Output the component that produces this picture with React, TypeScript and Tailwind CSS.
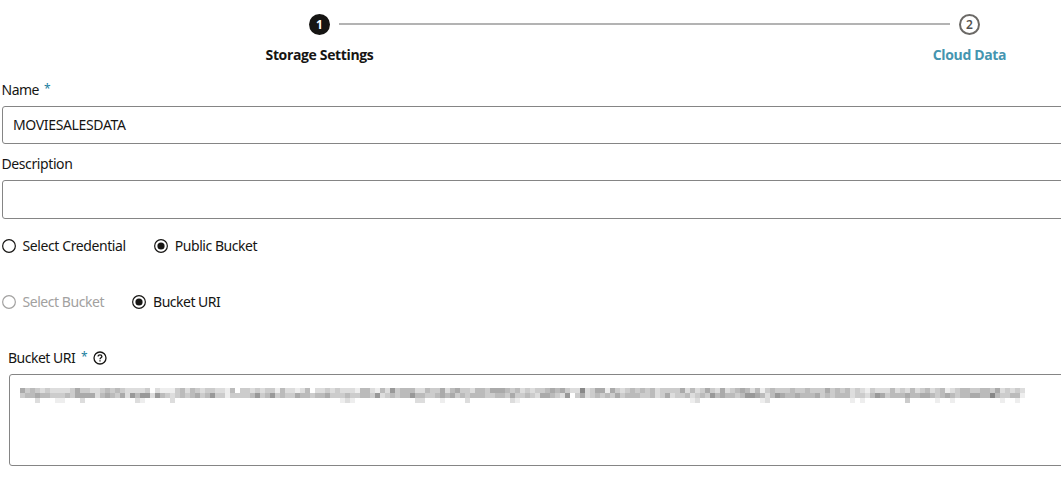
import React from "react";

const CELL = 5;
// one hex digit per cell: f is white, 0 is black
const redacted = [
  "acbcdcdddd" + "caccddcbcb" + "cddddcfdee" + "ecbdbcdccd" + "debfccdcdc" +
    "cebddedbfddcdcdddebbdebd9" + "cbbbddbccadbaccdbbcaaabcb" + "dc" +
    "dccbabacdd" + "8dcaaeacdc" + "bcbcbdcccc" + "adbdcacdad" + "cbabdbecbc" +
    "ccbccbccca" + "cbcbdcdecd" + "ddbdcdbdcb" + "dcbedcbbcc" + "bbcadcdcd",
  "cbbabbcccb" + "caaaadbabc" + "ad9b99d9bc" + "dcbcbacb9c" + "ceccccb9cb" +
    "9cbccabbcbbacccbccbbc9dcb" + "cbb9bbccbabacbcbbbccbbcac" + "cb" +
    "cdaabcd9fc" + "adcbcbcacb" + "bbccbdcadc" + "cbdcbc9bab" + "bcb99abdb9" +
    "abbabbbacbcbbb" + "dccdb9acbbbabbaabcbabcbbaabb8bccbbe",
];
const tails: [number, string][] = [
  [3, "d"], [4, "f"], [6, "f"], [7, "e"], [8, "e"], [12, "d"], [23, "d"], [24, "e"],
  [30, "d"], [31, "f"], [64, "e"], [65, "d"], [66, "e"], [79, "d"], [80, "d"],
  [84, "e"], [89, "d"], [98, "d"], [99, "e"], [134, "e"], [135, "d"], [148, "e"],
  [149, "d"], [166, "e"], [168, "e"], [169, "f"], [177, "c"], [183, "e"], [186, "e"],
  [196, "e"], [199, "e"],
];

function shade(digit: string) {
  return `#${digit}${digit}${digit}`;
}

function Redacted() {
  return (
    <svg width="1005" height="15" shapeRendering="crispEdges" className="block shrink-0">
      {redacted.map((row, y) =>
        row.split("").map((digit, x) => (
          <rect key={`${x}-${y}`} x={x * CELL} y={y * CELL} width={CELL} height={CELL} fill={shade(digit)} />
        )),
      )}
      {tails.map(([x, digit]) => (
        <rect key={x} x={x * CELL} y={10} width={CELL} height={CELL} fill={shade(digit)} />
      ))}
    </svg>
  );
}

function Radio({ label, checked, disabled, tracking }: { label: string; checked?: boolean; disabled?: boolean; tracking: string }) {
  return (
    <label className={`flex items-center gap-[7px] ${disabled ? "text-[#a2a1a0]" : "text-[#161513]"}`}>
      <svg width="14" height="14" viewBox="0 0 14 14" fill="none" stroke="currentColor">
        <circle cx="7" cy="7" r="6.35" strokeWidth="1.2" />
        {checked && <circle cx="7" cy="7" r="3.6" fill="currentColor" stroke="none" />}
      </svg>
      <span className={`whitespace-nowrap ${tracking}`}>{label}</span>
    </label>
  );
}

export default function App() {
  return (
    <main className="h-[480px] w-[1061px] overflow-hidden bg-white font-['Noto_Sans','Open_Sans',sans-serif] text-[14px] leading-5 text-[#161513]">
      <header className="flex h-[80px] pt-[14px]">
        <div className="ml-[259px] flex w-[121px] shrink-0 flex-col items-center">
          <span className="flex size-[21px] items-center justify-center rounded-full bg-[#161513] text-[12px] font-bold text-white">1</span>
          <span className="mt-[10px] whitespace-nowrap font-['Open_Sans'] font-bold tracking-[-0.35px]">Storage Settings</span>
        </div>
        <div className="-ml-[41px] mt-[9px] h-[2px] w-[611px] shrink-0 bg-[#b3b3b3]" />
        <div className="-ml-[41px] flex w-[121px] shrink-0 flex-col items-center">
          <span className="flex size-[21px] items-center justify-center rounded-full border-2 border-[#6b6966] text-[12px] font-semibold text-[#55534f]">2</span>
          <span className="mt-[10px] whitespace-nowrap font-['Open_Sans'] font-bold tracking-[-0.35px] text-[#4595b0]">Cloud Data</span>
        </div>
      </header>
      <div className="flex h-[26px] pl-[1.5px]">
        <span className="tracking-[-0.5px]">Name</span>
        <span className="ml-[5px] -mt-px text-[12px] text-[#227e9e]">*</span>
      </div>
      <div className="ml-[2px] flex h-[38px] w-[1070px] items-center rounded-[3px] border border-[#858585] pl-[10px]">
        <span className="tracking-[-0.35px]">MOVIESALESDATA</span>
      </div>
      <div className="h-[36px] pl-[1.5px] pt-[10px] tracking-[-0.4px]">Description</div>
      <div className="ml-[2px] h-[39px] w-[1070px] rounded-[3px] border border-[#858585]" />
      <div className="mt-[17px] flex h-5 gap-[28px] pl-[1.5px]">
        <Radio label="Select Credential" tracking="tracking-[-0.4px]" />
        <Radio label="Public Bucket" checked tracking="tracking-[-0.45px]" />
      </div>
      <div className="mt-[36px] flex h-5 gap-[28px] pl-[1.5px]">
        <Radio label="Select Bucket" disabled tracking="tracking-[-0.45px]" />
        <Radio label="Bucket URI" checked tracking="tracking-[-0.5px]" />
      </div>
      <div className="mt-[36px] flex h-[26px] pl-[8px]">
        <span className="w-[67px] whitespace-nowrap tracking-[-0.5px]">Bucket URI</span>
        <span className="ml-[6px] w-[6px] -mt-px text-[12px] text-[#227e9e]">*</span>
        <svg className="ml-[6px] mt-[3px]" width="14" height="14" viewBox="0 0 14 14" fill="none" stroke="#161513" strokeWidth="1.3">
          <circle cx="7" cy="7" r="6" />
          <path d="M5.1 5.6C5.1 4.5 5.9 3.8 7 3.8s1.9.7 1.9 1.6c0 1.3-1.9 1.4-1.9 2.8" />
          <path d="M7 9.2v1.3" />
        </svg>
      </div>
      <div className="ml-[9px] h-[92px] w-[1070px] rounded-[3px] border border-[#858585] pl-[10px] pt-[13px]">
        <Redacted />
      </div>
    </main>
  );
}
